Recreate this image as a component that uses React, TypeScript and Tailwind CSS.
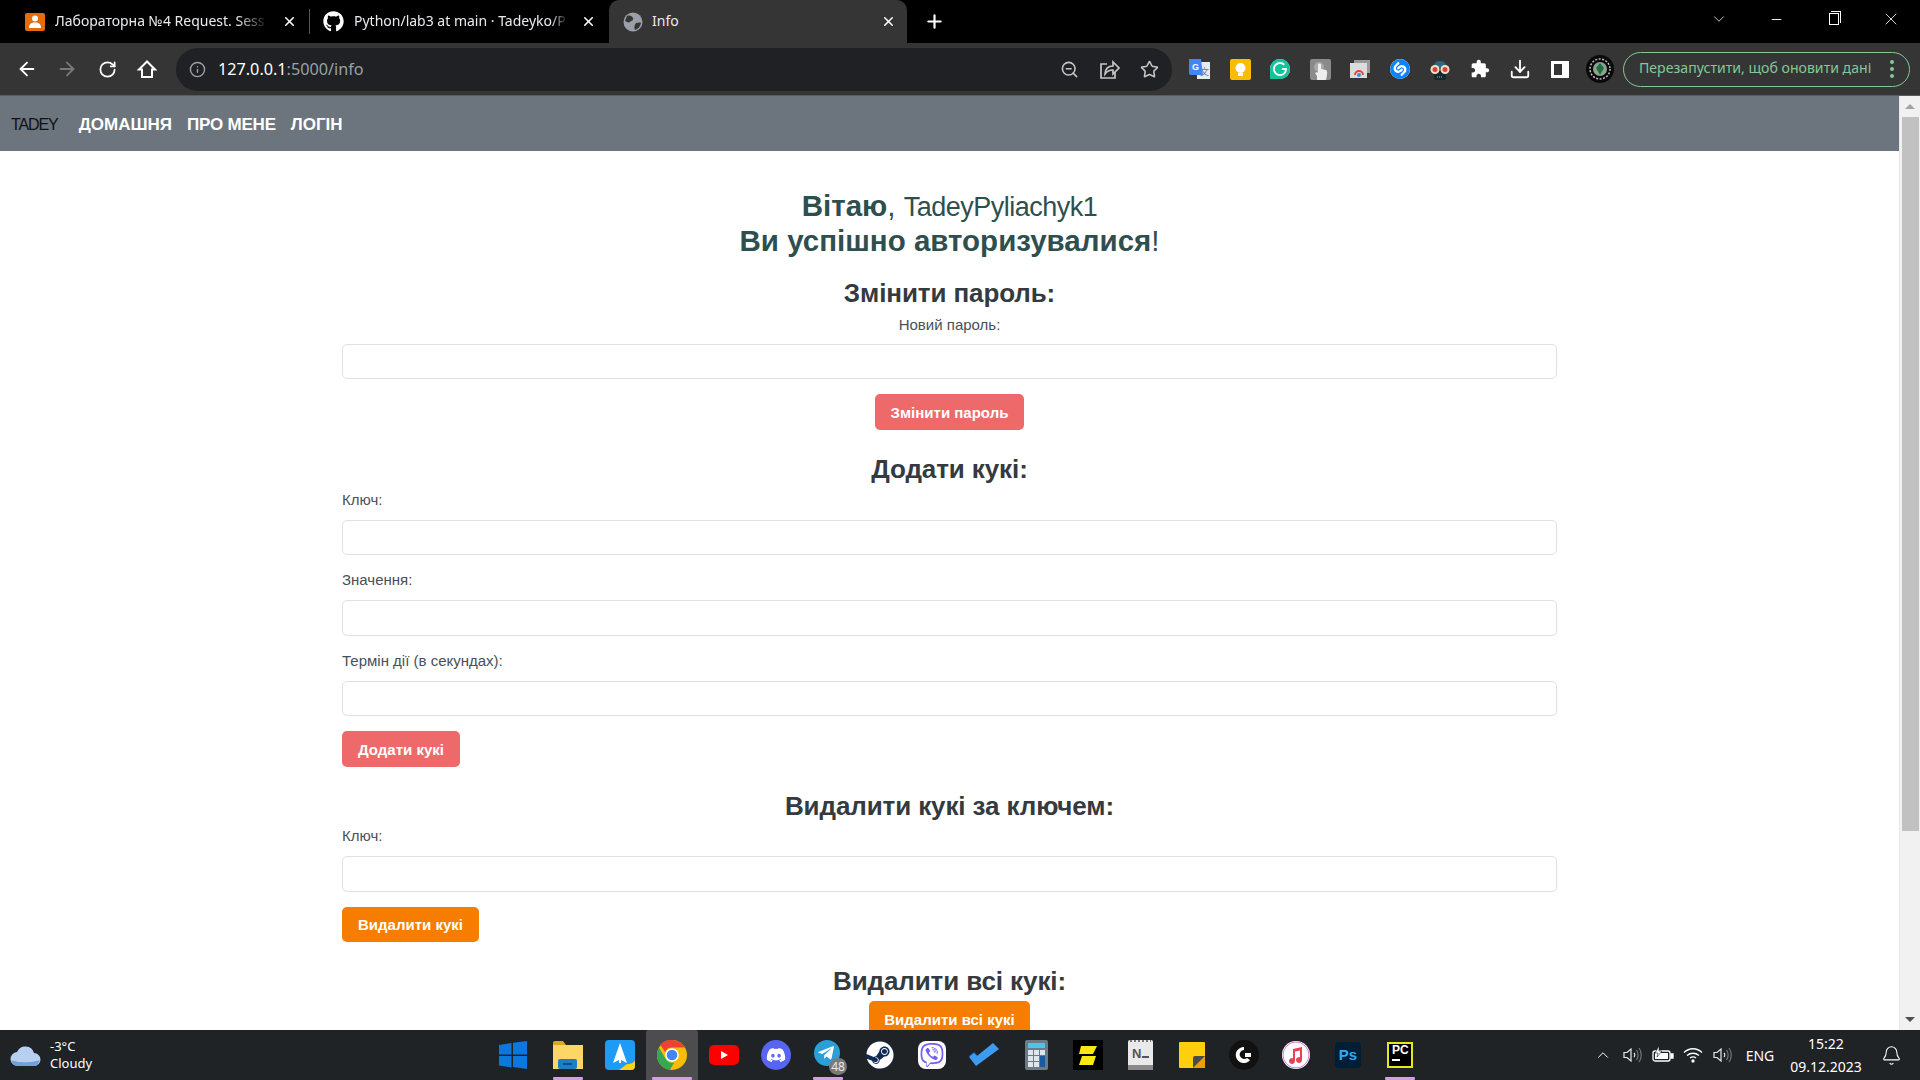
import type { ReactNode } from "react";
import { ArrowLeft, ArrowRight, Bell, ChevronDown, ChevronUp, Download, Info, Minus, Plus, RotateCw, Star, X, ZoomOut } from "lucide-react";
import { FaDiscord, FaGithub, FaSteam, FaTelegramPlane, FaViber } from "react-icons/fa";
import { SiGrammarly, SiShazam } from "react-icons/si";

const uiFont = "font-['Noto_Sans',sans-serif]";

function ChromeLogo({ size = 30 }: { size?: number }) {
  return (
    <svg width={size} height={size} viewBox="0 0 48 48">
      <circle cx="24" cy="24" r="24" fill="#fbbc04" />
      <path d="M24 0a24 24 0 0 1 20.8 12H24a12 12 0 0 0-11 7L5 7A24 24 0 0 1 24 0z" fill="#ea4335" />
      <path d="M3.2 12 14 30.5a12 12 0 0 0 13.6 5.5L20.5 48A24 24 0 0 1 3.2 12z" fill="#34a853" />
      <circle cx="24" cy="24" r="11" fill="#fff" />
      <circle cx="24" cy="24" r="8.5" fill="#4285f4" />
    </svg>
  );
}

function TabStrip() {
  return (
    <div className={`flex h-[43px] items-end bg-black text-[14px] text-[#e8eaed] ${uiFont}`}>
      <div className="flex h-[43px] w-[309px] items-center pl-[25px]">
        <span className="flex h-[18px] w-[20px] shrink-0 items-center justify-center rounded-[2px] bg-[#e46c0a]">
          <svg width="12" height="13" viewBox="0 0 12 13" fill="#fff">
            <circle cx="6" cy="3.5" r="3" />
            <path d="M0 13c0-4 2-5.5 6-5.5S12 9 12 13z" />
          </svg>
        </span>
        <span className="ml-[10px] w-[214px] whitespace-nowrap pb-[2px] [mask-image:linear-gradient(to_right,black_85%,transparent)]">
          Лабораторна №4 Request. Sess
        </span>
        <X size={15} strokeWidth={2.5} className="ml-[13px] shrink-0 text-white" />
      </div>
      <div className="mb-[9px] h-[25px] w-px bg-[#555]" />
      <div className="flex h-[43px] w-[299px] items-center pl-[13px]">
        <FaGithub size={21} className="shrink-0 text-white" />
        <span className="ml-[10px] w-[214px] whitespace-nowrap pb-[2px] [mask-image:linear-gradient(to_right,black_92%,transparent)]">
          Python/lab3 at main · Tadeyko/P
        </span>
        <X size={15} strokeWidth={2.5} className="ml-[13px] shrink-0 text-white" />
      </div>
      <div className="flex h-[43px] w-[298px] items-center rounded-t-[10px] bg-[#353535] pl-[14px]">
        <svg width="20" height="20" viewBox="0 0 20 20" className="shrink-0">
          <circle cx="10" cy="10" r="9.5" fill="#9aa0a6" />
          <path d="M4 4c3-1 5 0 6 2s-2 3-3 4-3 0-5-1zM13 11c2 0 4-1 5 0-1 4-3 6-6 7-1-2-1-5 1-7z" fill="#353535" />
        </svg>
        <span className="ml-[9px] flex-1 pb-[2px]">Info</span>
        <X size={15} strokeWidth={2.5} className="mr-[11px] shrink-0 text-white" />
      </div>
      <div className="flex h-[43px] w-[55px] items-center justify-center">
        <Plus size={21} strokeWidth={2.5} className="text-white" />
      </div>
      <div className="ml-auto flex h-[38px] items-center self-start text-white">
        <span className="flex w-[54px] justify-center"><ChevronDown size={18} strokeWidth={1} /></span>
        <span className="flex w-[60px] justify-center"><Minus size={15} strokeWidth={1.5} /></span>
        <span className="flex w-[56px] justify-center">
          <span className="relative block h-[12px] w-[10px] border border-white before:absolute before:-top-[3px] before:-right-[3px] before:h-[12px] before:w-[10px] before:border-t before:border-r before:border-white" />
        </span>
        <span className="flex w-[58px] justify-center"><X size={20} strokeWidth={1} /></span>
      </div>
    </div>
  );
}

function ToolButton({ children }: { children: ReactNode }) {
  return <span className="flex h-full w-[40px] shrink-0 items-center justify-center">{children}</span>;
}

function Omnibox() {
  return (
    <div className={`flex h-[43px] w-[996px] shrink-0 items-center rounded-full bg-[#202124] ${uiFont}`}>
      <Info size={17} className="ml-[13px] shrink-0 text-[#9aa0a6]" />
      <span className="ml-[12px] flex-1 text-[16.2px] text-[#9aa0a6]">
        <span className="text-white">127.0.0.1</span>:5000/info
      </span>
      <span className="flex w-[120px] items-center">
        <span className="flex w-[40px] justify-center"><ZoomOut size={19} className="text-[#c4c7c5]" /></span>
        <span className="flex w-[40px] justify-center">
          <svg width="21" height="21" viewBox="0 0 21 21" fill="none" stroke="#c4c7c5" strokeWidth="1.7">
            <path d="M8 5H2v14h14v-6" />
            <path d="M6 15c0-5 3-8 8-8V3l6 6-6 6v-4c-4 0-6 1-8 4z" />
          </svg>
        </span>
        <span className="flex w-[40px] justify-center"><Star size={19} className="text-[#c4c7c5]" /></span>
      </span>
      <span className="w-[3px]" />
    </div>
  );
}

function Extensions() {
  return (
    <>
      <ToolButton>
        <svg width="22" height="21" viewBox="0 0 22 21">
          <rect x="8" y="3" width="13" height="17" fill="#e8eaed" />
          <text x="11" y="16" fontSize="9" fill="#777" fontFamily="'Noto Sans CJK SC',sans-serif">文</text>
          <path d="M0 0h12l2 16H2a2 2 0 0 1-2-2z" fill="#4285f4" />
          <text x="3" y="11" fontSize="9" fontWeight="700" fill="#fff" fontFamily="'Liberation Sans',sans-serif">G</text>
        </svg>
      </ToolButton>
      <ToolButton>
        <svg width="21" height="21" viewBox="0 0 21 21">
          <rect width="21" height="21" rx="2" fill="#fbbc04" />
          <circle cx="10.5" cy="9" r="5" fill="#fff" />
          <rect x="8" y="14" width="5" height="3" fill="#fff" />
        </svg>
      </ToolButton>
      <ToolButton><span className="flex h-[20px] w-[20px] items-center justify-center rounded-full bg-white"><SiGrammarly size={20} className="text-[#15c39a]" /></span></ToolButton>
      <ToolButton>
        <svg width="21" height="21" viewBox="0 0 21 21">
          <rect width="21" height="21" rx="2" fill="#8a8a8a" />
          <circle cx="9" cy="8" r="5" fill="#aaa" />
          <path d="M7 21v-4l-2-3 2-1 1 1V6c0-2 3-2 3 0v4l5 1c2 1 1 6 0 10z" fill="#eee" />
        </svg>
      </ToolButton>
      <ToolButton>
        <svg width="20" height="18" viewBox="0 0 20 18">
          <rect x="4" y="0" width="16" height="13" fill="#9a9a9a" />
          <rect x="0" y="3" width="17" height="15" fill="#dcdcdc" />
          <path d="M4 15a5 5 0 0 1 10 0h-2a3 3 0 0 0-6 0z" fill="#ea4335" />
          <circle cx="9" cy="15" r="2" fill="#4285f4" />
        </svg>
      </ToolButton>
      <ToolButton><SiShazam size={20} className="rounded-full bg-white text-[#0a84ff]" /></ToolButton>
      <ToolButton>
        <svg width="20" height="21" viewBox="0 0 20 21">
          <path d="M3 9a7 7 0 0 1 14 0z" fill="#2d6a7d" />
          <rect x="4" y="12" width="12" height="9" rx="2" fill="#16272e" />
          <circle cx="5" cy="10.500" r="4.500" fill="#f1ddcf" />
          <circle cx="15" cy="10.500" r="4.500" fill="#f1ddcf" />
          <circle cx="5" cy="10.500" r="2.500" fill="#d9442f" />
          <circle cx="15" cy="10.500" r="2.500" fill="#d9442f" />
          <path d="M7 18h6" stroke="#7cc" strokeDasharray="1 1" />
        </svg>
      </ToolButton>
      <ToolButton>
        <svg width="20" height="20" viewBox="0 0 24 24" fill="#fff">
          <path d="M20.500 11H19V7c0-1.100-.9-2-2-2h-4V3.500C13 2.120 11.880 1 10.500 1S8 2.120 8 3.500V5H4c-1.100 0-2 .9-2 2v3.800h1.500c1.500 0 2.700 1.200 2.700 2.700S5 16.200 3.500 16.200H2V20c0 1.100.9 2 2 2h3.800v-1.500c0-1.500 1.200-2.700 2.700-2.700s2.700 1.200 2.700 2.700V22H17c1.100 0 2-.9 2-2v-4h1.500c1.380 0 2.500-1.120 2.500-2.500S21.880 11 20.500 11z" />
        </svg>
      </ToolButton>
      <ToolButton><Download size={22} strokeWidth={2} className="text-white" /></ToolButton>
      <ToolButton>
        <span className="flex h-[17px] w-[18px] border-[3px] border-r-[7px] border-white" />
      </ToolButton>
      <ToolButton>
        <svg width="28" height="28" viewBox="0 0 28 28">
          <circle cx="14" cy="14" r="14" fill="#0a0a0a" />
          <circle cx="14" cy="14" r="10" fill="none" stroke="#bbb" strokeDasharray="2 1.5" strokeWidth="1.5" />
          <circle cx="14" cy="14" r="7" fill="#8ba38f" />
          <path d="M14 8l4 5-4 7-4-7z" fill="#1f6f43" />
        </svg>
      </ToolButton>
    </>
  );
}

function Toolbar() {
  return (
    <div className="flex h-[53px] items-center border-b border-[#5c5c5c] bg-[#353535]">
      <div className="ml-[7px] flex h-full shrink-0">
        <ToolButton><ArrowLeft size={22} strokeWidth={2} className="text-white" /></ToolButton>
        <ToolButton><ArrowRight size={22} strokeWidth={2} className="text-[#77797b]" /></ToolButton>
        <ToolButton><RotateCw size={19} strokeWidth={2.2} className="text-white" /></ToolButton>
        <ToolButton>
          <svg width="20" height="20" viewBox="0 0 20 20" fill="none" stroke="#fff" strokeWidth="2">
            <path d="M2 10.500 10 2.500l8 8h-3V18H5v-7.500z" />
          </svg>
        </ToolButton>
      </div>
      <span className="w-[9px] shrink-0" />
      <Omnibox />
      <div className="ml-[8px] flex h-full">
        <Extensions />
      </div>
      <div className={`ml-[3px] flex h-[35px] w-[287px] items-center rounded-full border border-[#81c995] pl-[15px] text-[14.1px] text-[#81c995] ${uiFont}`}>
        <span className="flex-1 whitespace-nowrap pb-[2px]">Перезапустити, щоб оновити дані</span>
        <span className="mr-[15px] flex flex-col gap-[3px]">
          <span className="h-[4px] w-[4px] rounded-full bg-[#81c995]" />
          <span className="h-[4px] w-[4px] rounded-full bg-[#81c995]" />
          <span className="h-[4px] w-[4px] rounded-full bg-[#81c995]" />
        </span>
      </div>
    </div>
  );
}

function SiteNav() {
  return (
    <nav className="flex h-[55px] items-center bg-[#6c757d] pt-[2px] pl-[11px] text-[17px]">
      <span className="text-[16px] tracking-[-1.1px] text-[#111]">TADEY</span>
      <a className="ml-[21px] font-bold text-white">ДОМАШНЯ</a>
      <a className="ml-[15px] font-bold tracking-[-0.2px] text-white">ПРО МЕНЕ</a>
      <a className="ml-[15px] font-bold text-white">ЛОГІН</a>
    </nav>
  );
}

function Heading({ text, className }: { text: string; className: string }) {
  return <h2 className={`h-[30px] text-center text-[26px] leading-[30px] font-bold tracking-[-0.1px] text-[#343a40] ${className}`}>{text}</h2>;
}

function Field({ label, className, center, tall }: { label: string; className: string; center?: boolean; tall?: boolean }) {
  return (
    <div className={className}>
      <label className={`block h-5 text-[15px] leading-5 text-[#495057] ${center ? "text-center" : ""}`}>{label}</label>
      <input className={`block w-full rounded-[5px] border border-[#dfe1e8] bg-white ${center ? "mt-[9px]" : "mt-[10px]"} ${tall ? "h-[36px]" : "h-[35px]"}`} />
    </div>
  );
}

function Btn({ text, color, className }: { text: string; color: "red" | "orange"; className: string }) {
  return (
    <button className={`block rounded-[5px] pt-[2px] text-[15px] font-bold text-white ${color === "red" ? "bg-[#ee6a6a]" : "bg-[#f77d00]"} ${className}`}>
      {text}
    </button>
  );
}

function Page() {
  return (
    <div className="mx-auto w-[1215px] pt-[38px]">
      <h1 className="text-center text-[29.5px] leading-[34px] font-bold text-[#2f4f4f]">
        Вітаю<span className="font-normal">, </span>
        <span className="text-[27px] font-normal tracking-[-0.5px]">TadeyPyliachyk1</span>
        <br />
        Ви успішно авторизувалися<span className="font-normal">!</span>
      </h1>
      <Heading text="Змінити пароль:" className="mt-[20px]" />
      <Field label="Новий пароль:" center className="mt-[7px]" />
      <Btn text="Змінити пароль" color="red" className="mx-auto mt-[15px] h-[36px] px-[16px]" />

      <Heading text="Додати кукі:" className="mt-[24px]" />
      <Field label="Ключ:" className="mt-[6px]" />
      <Field label="Значення:" tall className="mt-[15px]" />
      <Field label="Термін дії (в секундах):" className="mt-[15px]" />
      <Btn text="Додати кукі" color="red" className="mt-[15px] h-[36px] px-[16px]" />

      <Heading text="Видалити кукі за ключем:" className="mt-[24px]" />
      <Field label="Ключ:" tall className="mt-[5px]" />
      <Btn text="Видалити кукі" color="orange" className="mt-[15px] h-[35px] px-[16px]" />

      <Heading text="Видалити всі кукі:" className="mt-[24px]" />
      <Btn text="Видалити всі кукі" color="orange" className="mx-auto mt-[5px] h-[36px] px-[15px]" />
    </div>
  );
}

function Scrollbar() {
  return (
    <div className="flex w-[21px] shrink-0 flex-col items-center border-l border-[#e8e8e8] bg-[#f1f1f1]">
      <div className="flex h-[21px] items-center justify-center">
        <span className="h-0 w-0 border-x-[5px] border-b-[5px] border-x-transparent border-b-[#a3a3a3]" />
      </div>
      <div className="h-[714px] w-[17px] bg-[#c1c1c1]" />
      <div className="mt-auto flex h-[21px] items-center justify-center">
        <span className="h-0 w-0 border-x-[5px] border-t-[5px] border-x-transparent border-t-[#505050]" />
      </div>
    </div>
  );
}

function TaskIcon({ children, running, active }: { children: ReactNode; running?: boolean; active?: boolean }) {
  return (
    <div className={`relative flex h-[50px] w-[52px] shrink-0 items-center justify-center rounded-t-[3px] ${active ? "bg-[#4d4d4f]" : ""}`}>
      {children}
      {running && (
        <span className={`absolute bottom-0 h-[3px] rounded-[1px] bg-[#d29fe2] ${active ? "w-[40px]" : "w-[30px]"}`} />
      )}
    </div>
  );
}

function TaskIcons() {
  return (
    <div className="flex">
      <div className="mr-[3px]">
        <TaskIcon>
          <svg width="28" height="28" viewBox="0 0 28 28" fill="#0a78de">
            <path d="M0 4l12.5-2v11.5H0zM14 1.700 28 0v13.500H14zM0 15h12.500v11.500L0 24.500zM14 15h14v13l-14-2z" />
          </svg>
        </TaskIcon>
      </div>
      <TaskIcon running>
        <svg width="30" height="28" viewBox="0 0 30 28">
          <path d="M0 2a2 2 0 0 1 2-2h8l3 4H0z" fill="#e0a526" />
          <rect y="4" width="30" height="24" fill="#fdd766" />
          <rect x="5" y="18" width="19" height="10" rx="2" fill="#1b7fc4" />
          <rect x="10" y="22" width="9" height="2" fill="#0d4f8a" />
        </svg>
      </TaskIcon>
      <TaskIcon>
        <svg width="30" height="30" viewBox="0 0 30 30">
          <rect width="30" height="30" rx="4" fill="#1e9bf5" />
          <path d="M22 24c4 0 7-1 8-4v6a4 4 0 0 1-4 4H14z" fill="#fcd116" />
          <path d="M15 3l7 20-6-3v3h-2v-3l-6 3z" fill="#fff" />
        </svg>
      </TaskIcon>
      <TaskIcon running active><ChromeLogo /></TaskIcon>
      <TaskIcon>
        <svg width="30" height="20" viewBox="0 0 30 20">
          <rect width="30" height="20" rx="5" fill="#f00" />
          <path d="M12 6l7 4-7 4z" fill="#fff" />
        </svg>
      </TaskIcon>
      <TaskIcon>
        <span className="flex h-[30px] w-[30px] items-center justify-center rounded-full bg-[#5865f2]"><FaDiscord size={20} className="text-white" /></span>
      </TaskIcon>
      <TaskIcon running>
        <span className="relative block h-[26px] w-[26px] -translate-x-[1px] -translate-y-[2px] rounded-full bg-[#2a9fd8]">
          <FaTelegramPlane size={18} className="absolute top-[4px] left-[3px] text-white" />
          <span className="absolute -right-[7px] -bottom-[9px] flex h-[17px] w-[18px] items-center justify-center rounded-full bg-[#7a7a7a] font-['Noto_Sans',sans-serif] text-[12px] leading-none text-[#e8e8e8]">48</span>
        </span>
      </TaskIcon>
      <TaskIcon>
        <span className="flex h-[28px] w-[28px] items-center justify-center rounded-full bg-[#0f2a55]"><FaSteam size={28} className="text-white" /></span>
      </TaskIcon>
      <TaskIcon>
        <span className="flex h-[28px] w-[28px] items-center justify-center rounded-[8px] bg-white"><FaViber size={24} className="text-[#7360f2]" /></span>
      </TaskIcon>
      <TaskIcon>
        <svg width="30" height="24" viewBox="0 0 30 24">
          <path d="M0 13l5-4 6 6-4 4z" fill="#185abd" />
          <path d="M7 23L0 14l5-4 3 3L24 0l6 6z" fill="#3d9bf0" />
        </svg>
      </TaskIcon>
      <TaskIcon>
        <svg width="23" height="30" viewBox="0 0 23 30">
          <rect width="23" height="30" rx="2" fill="#6d7b88" />
          <rect x="3" y="3" width="17" height="5" fill="#4fc3e8" />
          <path d="M3 10h5v5H3zM9 10h5v5H9zM15 10h5v5h-5zM3 16h5v5H3zM9 16h5v5H9zM3 22h5v5H3zM9 22h5v5H9z" fill="#dfe6ea" />
          <rect x="15" y="16" width="5" height="11" fill="#1a5a9e" />
        </svg>
      </TaskIcon>
      <TaskIcon>
        <svg width="30" height="30" viewBox="0 0 30 30">
          <rect width="30" height="30" fill="#000" />
          <path d="M8 6h16l-4 8H6zM9 16h14l-3 9H6z" fill="#f7e911" />
        </svg>
      </TaskIcon>
      <TaskIcon>
        <svg width="25" height="30" viewBox="0 0 25 30">
          <rect width="25" height="30" rx="2" fill="#e9e9e9" />
          <rect y="25" width="25" height="5" fill="#8a8a8a" />
          <path d="M2 1h21" stroke="#777" strokeDasharray="2 2" strokeWidth="2" />
          <text x="4" y="18" fontSize="13" fontWeight="700" fill="#555" fontFamily="'Liberation Sans',sans-serif">N</text>
          <rect x="14" y="16" width="7" height="2" fill="#555" />
        </svg>
      </TaskIcon>
      <TaskIcon>
        <svg width="26" height="26" viewBox="0 0 26 26">
          <rect width="26" height="26" rx="1" fill="#ffcf0d" />
          <path d="M26 14v12H14z" fill="#e8a200" />
          <path d="M14 26l12-12H16a2 2 0 0 0-2 2z" fill="#4a4a4a" />
        </svg>
      </TaskIcon>
      <TaskIcon>
        <svg width="30" height="30" viewBox="0 0 30 30">
          <circle cx="15" cy="15" r="15" fill="#111" />
          <path d="M15 7a8 8 0 1 0 6 13l-3-2a4.500 4.500 0 1 1-3-8z" fill="#fff" />
          <path d="M16 13h6v4h-6z" fill="#fff" />
        </svg>
      </TaskIcon>
      <TaskIcon>
        <svg width="28" height="28" viewBox="0 0 28 28">
          <circle cx="14" cy="14" r="14" fill="#fff" />
          <circle cx="14" cy="14" r="13" fill="none" stroke="#d77ad8" strokeWidth="1" />
          <path d="M11 8l9-2v13a3 3 0 1 1-2-2.800V9.500l-5 1V20a3 3 0 1 1-2-2.800z" fill="#e8425a" />
        </svg>
      </TaskIcon>
      <TaskIcon>
        <span className="flex h-[26px] w-[26px] items-center justify-center rounded-[4px] bg-[#001e36] font-['Liberation_Sans',sans-serif] text-[15px] font-bold text-[#31a8ff]">Ps</span>
      </TaskIcon>
      <TaskIcon running>
        <span className="flex h-[26px] w-[26px] flex-col border-[2px] border-[#e4e71e] bg-black pl-[3px] font-['Liberation_Sans',sans-serif] text-[12px] leading-[13px] font-bold text-white">
          PC
          <span className="mt-[2px] h-[2px] w-[8px] bg-white" />
        </span>
      </TaskIcon>
    </div>
  );
}

function Speaker() {
  return (
    <svg width="20" height="18" viewBox="0 0 20 18" fill="none" stroke="#e8e8e8" strokeWidth="1.200">
      <path d="M1 6.500h3l4-3.500v12l-4-3.500H1z" />
      <path d="M11 7c1 1 1 3 0 4" />
      <path d="M13.500 4c2 3 2 7 0 10M16 2c3 4 3 10 0 14" stroke="#777" />
    </svg>
  );
}

function Tray() {
  return (
    <div className={`ml-auto flex h-full items-center pr-[8px] text-[14px] text-white ${uiFont}`}>
      <span className="flex w-[30px] justify-center"><ChevronUp size={18} strokeWidth={1.3} /></span>
      <span className="flex w-[30px] justify-center"><Speaker /></span>
      <span className="flex w-[30px] justify-center">
        <svg width="22" height="18" viewBox="0 0 22 18" fill="none" stroke="#fff" strokeWidth="1.300">
          <rect x="1" y="5" width="17" height="10" rx="2" />
          <rect x="3" y="7" width="13" height="6" fill="#fff" stroke="none" />
          <path d="M19 8h2v4h-2z" fill="#fff" />
          <path d="M7 0L3 7h3l-1 4 5-6H7z" fill="#fff" stroke="#202326" strokeWidth=".6" />
        </svg>
      </span>
      <span className="flex w-[30px] justify-center">
        <svg width="20" height="16" viewBox="0 0 20 16" fill="none" stroke="#fff" strokeWidth="1.300">
          <path d="M1 5.500c5-5 13-5 18 0M4 8.500c3.500-3 8.500-3 12 0M7 11c2-1.500 4-1.500 6 0" />
          <circle cx="10" cy="14" r="1" fill="#fff" />
        </svg>
      </span>
      <span className="flex w-[30px] justify-center"><Speaker /></span>
      <span className="w-[44px] text-center">ENG</span>
      <span className="flex w-[88px] flex-col items-center gap-[3px] leading-[20px]">
        <span>15:22</span>
        <span>09.12.2023</span>
      </span>
      <span className="flex w-[42px] justify-center"><Bell size={21} strokeWidth={1.2} /></span>
    </div>
  );
}

function Taskbar() {
  return (
    <div className="flex h-[50px] shrink-0 items-center bg-[#202326]">
      <div className={`flex h-full w-[487px] shrink-0 items-center pl-[10px] text-[13px] text-white ${uiFont}`}>
        <svg width="31" height="24" viewBox="0 0 31 24">
          <path d="M8 23a7 7 0 0 1-1-14 9 9 0 0 1 17 1 6.500 6.500 0 0 1 0 13z" fill="#b8d0f0" />
          <path d="M1.500 17c5 3 22 3 28 0a6 6 0 0 1-5.500 6H8a7 7 0 0 1-6.500-6z" fill="#6f9fdd" />
        </svg>
        <div className="ml-[9px] flex flex-col leading-[17px]">
          <span>-3°C</span>
          <span>Cloudy</span>
        </div>
      </div>
      <TaskIcons />
      <Tray />
    </div>
  );
}

export default function App() {
  return (
    <div className="flex h-screen flex-col overflow-hidden bg-white font-['Liberation_Sans',sans-serif]">
      <TabStrip />
      <Toolbar />
      <div className="flex min-h-0 flex-1">
        <main className="min-w-0 flex-1 overflow-hidden">
          <SiteNav />
          <Page />
        </main>
        <Scrollbar />
      </div>
      <Taskbar />
    </div>
  );
}
